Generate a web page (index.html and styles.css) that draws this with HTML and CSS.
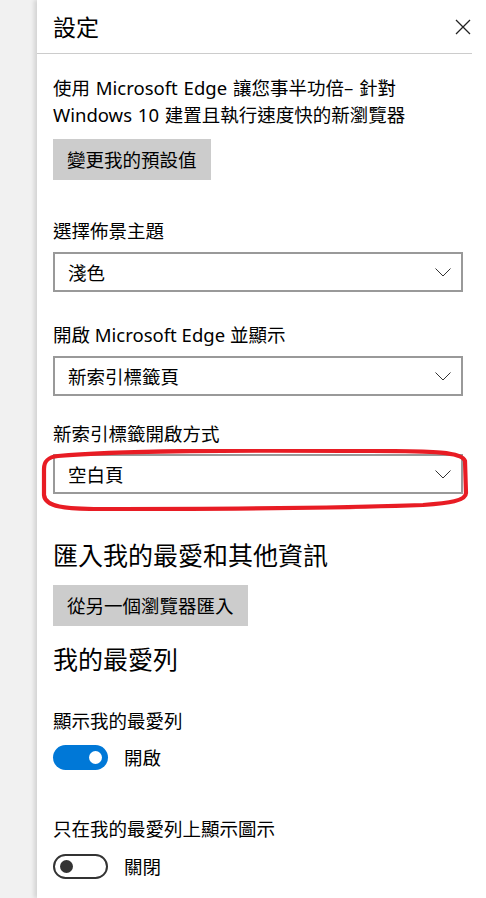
FILE: index.html
```html
<!DOCTYPE html>
<html lang="zh-Hant">
<head>
    <meta charset="utf-8" />
    <title>設定</title>
    <link rel="stylesheet" href="styles.css">
</head>
<body>
<div class="shell">
    <div class="backdrop"></div>
    <aside class="panel">
        <header class="panel-head">
            <h1>設定</h1>
            <span class="close">
                <svg width="16" height="16" viewBox="0 0 16 16"><path d="M1 1 L15 15 M15 1 L1 15" stroke="#222" stroke-width="1.3" fill="none"/></svg>
            </span>
        </header>
        <div class="panel-body">
            <p class="intro">使用 Microsoft Edge 讓您事半功倍– 針對<br/>Windows 10 建置且執行速度快的新瀏覽器</p>
            <button class="btn btn-default">變更我的預設值</button>

            <div class="field field-theme">
                <div class="label">選擇佈景主題</div>
                <div class="select"><span>淺色</span><svg class="chev" width="16" height="9" viewBox="0 0 16 9"><path d="M0.5 0.5 L8 8 L15.5 0.5" stroke="#333" stroke-width="1" fill="none"/></svg></div>
            </div>

            <div class="field field-start">
                <div class="label">開啟 Microsoft Edge 並顯示</div>
                <div class="select"><span>新索引標籤頁</span><svg class="chev" width="16" height="9" viewBox="0 0 16 9"><path d="M0.5 0.5 L8 8 L15.5 0.5" stroke="#333" stroke-width="1" fill="none"/></svg></div>
            </div>

            <div class="field field-newtab">
                <div class="label">新索引標籤開啟方式</div>
                <div class="select marked">
                    <span>空白頁</span><svg class="chev" width="16" height="9" viewBox="0 0 16 9"><path d="M0.5 0.5 L8 8 L15.5 0.5" stroke="#333" stroke-width="1" fill="none"/></svg>
                    <svg class="mark" width="430" height="62" viewBox="0 0 430 62"><path d="M17 7 C70 2 210 1 330 2 C394 2 421 3 424 12 L425 44 C425 52 408 54 382 56 C300 59 150 60 60 60 C24 60 4 58 3 46 L3 20 C3 11 8 8 17 7 Z" stroke="#e81c24" stroke-width="4.2" fill="none"/></svg>
                </div>
            </div>

            <h2 class="section section-import">匯入我的最愛和其他資訊</h2>
            <button class="btn btn-import">從另一個瀏覽器匯入</button>

            <h2 class="section section-bar">我的最愛列</h2>
            <div class="label label-bar">顯示我的最愛列</div>
            <div class="toggle-row toggle-row-bar">
                <span class="toggle on"><span class="knob"></span></span>
                <span class="toggle-text">開啟</span>
            </div>

            <div class="label label-icons">只在我的最愛列上顯示圖示</div>
            <div class="toggle-row toggle-row-icons">
                <span class="toggle off"><span class="knob"></span></span>
                <span class="toggle-text">關閉</span>
            </div>
        </div>
    </aside>
</div>
</body>
</html>
```

FILE: styles.css
```css
*{margin: 0;padding: 0;box-sizing: border-box;}
body{
    background-color: #fff;
    font-family: "Noto Sans", "Noto Sans CJK TC", sans-serif;
    color: #000;
    overflow: hidden;
}
.shell{
    display: flex;
    height: 898px;
}
.backdrop{
    width: 37px;
    flex: none;
    background-color: #f1f1f1;
}
.panel{
    flex: 1;
    background-color: #fff;
    box-shadow: -3px 0 4px rgba(0,0,0,0.12);
}
.panel-head{
    height: 54px;
    margin-right: 14px;
    border-bottom: 1px solid #ccc;
    display: flex;
    align-items: center;
    justify-content: space-between;
    padding-left: 16px;
}
.panel-head h1{
    font-size: 23px;
    font-weight: 400;
    line-height: 30px;
}
.close{
    display: flex;
    margin-right: 1px;
}
.panel-body{
    padding: 0 23px 0 16px;
}
.intro{
    font-size: 18.5px;
    line-height: 27px;
    margin-top: 20px;
    word-spacing: 1px;
}
.btn{
    display: block;
    border: none;
    background-color: #ccc;
    font-family: inherit;
    font-size: 18.5px;
    color: #000;
    height: 41px;
    line-height: 41px;
    padding: 0 14px;
}
.btn-default{margin-top: 11px;}
.btn-import{margin-top: 13px;}
.label{
    font-size: 18.5px;
    line-height: 28px;
}
.field .select{margin-top: 7px;}
.field-theme{margin-top: 37px;}
.field-start{margin-top: 29px;}
.field-newtab{margin-top: 24px;}
.field-newtab .select{margin-top: 6px;}
.select{
    position: relative;
    height: 40px;
    border: 2px solid #999;
    display: flex;
    align-items: center;
    justify-content: space-between;
    padding: 0 10px 0 13px;
    font-size: 18.5px;
}
.chev{display: block;}
.mark{
    position: absolute;
    left: -14px;
    top: -7px;
}
.section{
    font-size: 25px;
    font-weight: 400;
    line-height: 34px;
}
.section-import{margin-top: 44px;}
.section-bar{margin-top: 16px;}
.label-bar{margin-top: 31px;}
.label-icons{margin-top: 45px;}
.toggle-row{
    display: flex;
    align-items: center;
    gap: 16px;
    height: 25px;
}
.toggle-row-bar{margin-top: 10px;}
.toggle-row-icons{margin-top: 11px;}
.toggle{
    width: 55px;
    height: 25px;
    border-radius: 13px;
    display: flex;
    align-items: center;
}
.toggle.on{
    background-color: #0078d7;
    justify-content: flex-end;
    padding-right: 6px;
}
.toggle.off{
    border: 2px solid #333;
    padding-left: 5px;
}
.knob{
    width: 13px;
    height: 13px;
    border-radius: 50%;
}
.toggle.on .knob{background-color: #fff;}
.toggle.off .knob{background-color: #333;}
.toggle-text{
    font-size: 18.5px;
    line-height: 28px;
}
```
